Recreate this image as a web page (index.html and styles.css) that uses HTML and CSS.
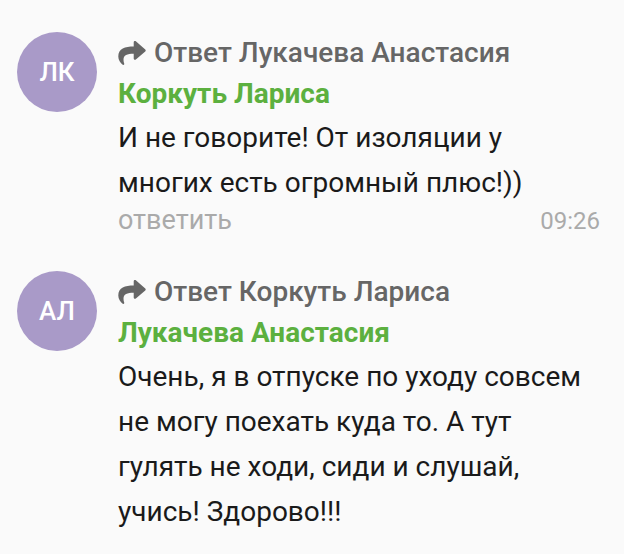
FILE: index.html
```html
<!DOCTYPE html>
<html lang="ru">
<head>
<meta charset="utf-8">
<link rel="stylesheet" href="styles.css">
</head>
<body>
<div class="list">
  <div class="comment">
    <div class="avatar">ЛК</div>
    <div class="content">
      <div class="reply-to">
        <svg class="share" viewBox="0 0 512 448"><path d="M503.7 189.8L327.7 37.9C312.3 24.5 288 35.3 288 56v80.1C127.4 137.9 0 170.1 0 322.3c0 61.4 39.6 122.3 83.3 154.1 13.7 9.9 33.1-2.5 28.1-18.6C66.1 312.8 132.9 274.3 288 272.1V360c0 20.7 24.3 31.5 39.7 18.2l176-152c11.1-9.6 11.1-26.8 0-36.4z" transform="translate(0,-32)"/></svg>
        <span>Ответ Лукачева Анастасия</span>
      </div>
      <div class="author">Коркуть Лариса</div>
      <div class="text">И не говорите! От изоляции у многих есть огромный плюс!))</div>
      <div class="footer">
        <span class="reply">ответить</span>
        <span class="time">09:26</span>
      </div>
    </div>
  </div>
  <div class="comment">
    <div class="avatar">АЛ</div>
    <div class="content">
      <div class="reply-to">
        <svg class="share" viewBox="0 0 512 448"><path d="M503.7 189.8L327.7 37.9C312.3 24.5 288 35.3 288 56v80.1C127.4 137.9 0 170.1 0 322.3c0 61.4 39.6 122.3 83.3 154.1 13.7 9.9 33.1-2.5 28.1-18.6C66.1 312.8 132.9 274.3 288 272.1V360c0 20.7 24.3 31.5 39.7 18.2l176-152c11.1-9.6 11.1-26.8 0-36.4z" transform="translate(0,-32)"/></svg>
        <span>Ответ Коркуть Лариса</span>
      </div>
      <div class="author">Лукачева Анастасия</div>
      <div class="text">Очень, я в отпуске по уходу совсем не могу поехать куда то. А тут гулять не ходи, сиди и слушай, учись! Здорово!!!</div>
    </div>
  </div>
</div>
</body>
</html>
```
FILE: styles.css
```css
html, body {
  margin: 0;
  padding: 0;
  background: #fafafa;
  font-family: Roboto, "Noto Sans", sans-serif;
}
.list {
  padding: 32px 24px 0 17px;
  display: flex;
  flex-direction: column;
  gap: 35px;
}
.comment {
  display: flex;
  align-items: flex-start;
}
.avatar {
  flex: none;
  width: 80px;
  height: 80px;
  border-radius: 50%;
  background: #a99ac8;
  color: #fff;
  font-size: 26px;
  font-weight: 500;
  display: flex;
  align-items: center;
  justify-content: center;
}
.content {
  flex: 1;
  margin-left: 21px;
  padding-top: 1px;
}
.reply-to {
  display: flex;
  align-items: center;
  color: #666;
  font-size: 28px;
  font-weight: 500;
  line-height: 40px;
}
.share {
  width: 28px;
  height: 24px;
  fill: #666;
  margin-right: 8px;
}
.author {
  color: #5cb03f;
  font-weight: bold;
  font-size: 28px;
  line-height: 42px;
}
.text {
  color: #1a1a1a;
  font-size: 28px;
  line-height: 45px;
}
.footer {
  display: flex;
  justify-content: space-between;
  align-items: baseline;
  color: #aaa;
  line-height: 30px;
}
.reply {
  font-size: 27px;
}
.time {
  font-size: 24px;
}
```
